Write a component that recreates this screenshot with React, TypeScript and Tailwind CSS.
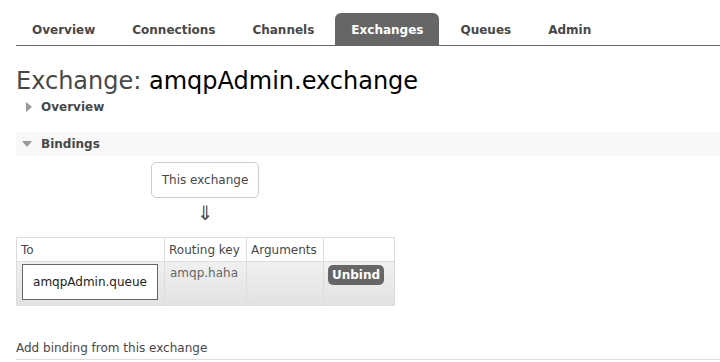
const font = { fontFamily: '"DejaVu Sans", Verdana, sans-serif' };

const tabs = ["Overview", "Connections", "Channels", "Exchanges", "Queues", "Admin"];

function Triangle({ open }: { open: boolean }) {
  return open ? (
    <svg width="10" height="6" viewBox="0 0 10 6" className="mr-[9px] ml-[6px]">
      <polygon points="0,0 10,0 5,6" fill="#999" />
    </svg>
  ) : (
    <svg width="6" height="10" viewBox="0 0 6 10" className="mr-[9px] ml-[10px]">
      <polygon points="0,0 6,5 0,10" fill="#999" />
    </svg>
  );
}

export default function App() {
  return (
    <div className="w-[720px] h-[362px] overflow-hidden bg-white text-[#484848]" style={font}>
      {/* nav */}
      <div className="ml-4 mt-[13px] flex border-b border-[#666] gap-[5px]">
        {tabs.map((t) => (
          <div
            key={t}
            className={
              "h-[32px] pt-[2px] px-4 flex items-center text-[12px] font-bold rounded-t-[6px] " +
              (t === "Exchanges" ? "bg-[#666] text-white" : "text-[#484848]")
            }
          >
            {t}
          </div>
        ))}
      </div>

      <div className="pl-4">
        <h1 className="text-[24px] leading-[30px] mt-[20px]">
          <span className="text-[#484848]">Exchange: </span>
          <span className="text-black">amqpAdmin.exchange</span>
        </h1>

        <div className="flex items-center h-[20px] mt-[1px] text-[12px] font-bold text-[#484848]">
          <Triangle open={false} />
          Overview
        </div>

        <div className="flex items-center h-[24px] mt-[15px] bg-[#f8f8f8] text-[12px] font-bold text-[#484848]">
          <Triangle open={true} />
          Bindings
        </div>

        <div className="flex flex-col items-start">
          <div className="ml-[135px] mt-[6px] w-[108px] h-[36px] border border-[#ccc] rounded-[5px] flex items-center justify-center text-[12px] text-[#484848]">
            This exchange
          </div>
          <div className="ml-[181px] mt-[3px] text-[20px] leading-[24px] text-[#484848]">⇓</div>
        </div>

        <table className="mt-[12px] border-collapse text-[12px] text-[#484848]">
          <thead>
            <tr className="h-[24px] text-left font-normal">
              <th className="border border-[#ddd] font-normal px-[4px] w-[148px]">To</th>
              <th className="border border-[#ddd] font-normal px-[4px] w-[82px]">Routing key</th>
              <th className="border border-[#ddd] font-normal px-[4px] w-[77px]">Arguments</th>
              <th className="border border-[#ddd] font-normal px-[4px] w-[71px]"></th>
            </tr>
          </thead>
          <tbody>
            <tr className="h-[44px] bg-gradient-to-b from-[#f0f0f0] to-[#e2e2e2] align-top">
              <td className="border border-[#ddd] px-[5px] py-[2px]">
                <div className="w-[136px] h-[36px] bg-white border border-[#666] flex items-center justify-center text-[#222]">
                  amqpAdmin.queue
                </div>
              </td>
              <td className="border border-[#ddd] px-[5px] pt-[2px] text-[#666]">amqp.haha</td>
              <td className="border border-[#ddd]"></td>
              <td className="border border-[#ddd] px-[4px] pt-[3px]">
                <div className="inline-flex items-center justify-center w-[56px] h-[20px] rounded-[5px] bg-[#666] text-white font-semibold">
                  Unbind
                </div>
              </td>
            </tr>
          </tbody>
        </table>

        <div className="mt-[33px] pb-[2px] border-b border-[#ddd] text-[12px] text-[#484848]">
          Add binding from this exchange
        </div>
      </div>
    </div>
  );
}
